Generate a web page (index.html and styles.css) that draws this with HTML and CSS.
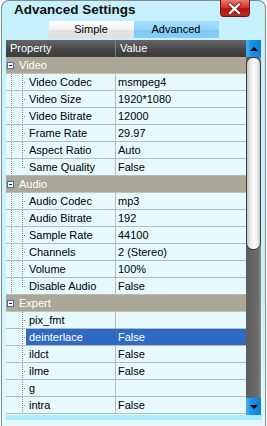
FILE: index.html
```html
<!DOCTYPE html>
<html>
<head>
<meta charset="utf-8">
<link rel="stylesheet" href="styles.css">
</head>
<body>
<div class="window">
  <div class="titlebar">
    <span class="title">Advanced Settings</span>
    <button class="close" aria-label="Close">
      <svg width="30" height="17" viewBox="0 0 30 17">
        <path d="M10 4.5 L19 13 M19 4.5 L10 13" stroke="#7a1010" stroke-width="4" stroke-linecap="square"/>
        <path d="M10 4.5 L19 13 M19 4.5 L10 13" stroke="#ffffff" stroke-width="2.4" stroke-linecap="square"/>
      </svg>
    </button>
  </div>
  <div class="tabs">
    <div class="tab">Simple</div>
    <div class="tab active">Advanced</div>
  </div>
  <div class="grid-wrap">
    <div class="grid">
      <div class="head"><div class="hprop">Property</div><div class="hval">Value</div></div>

      <div class="cat first"><span class="tog"></span><span>Video</span></div>
      <div class="row mid"><div class="gut"></div><div class="name">Video Codec</div><div class="value">msmpeg4</div></div>
      <div class="row mid"><div class="gut"></div><div class="name">Video Size</div><div class="value">1920*1080</div></div>
      <div class="row mid"><div class="gut"></div><div class="name">Video Bitrate</div><div class="value">12000</div></div>
      <div class="row mid"><div class="gut"></div><div class="name">Frame Rate</div><div class="value">29.97</div></div>
      <div class="row mid"><div class="gut"></div><div class="name">Aspect Ratio</div><div class="value">Auto</div></div>
      <div class="row last"><div class="gut"></div><div class="name">Same Quality</div><div class="value">False</div></div>

      <div class="cat"><span class="tog"></span><span>Audio</span></div>
      <div class="row mid"><div class="gut"></div><div class="name">Audio Codec</div><div class="value">mp3</div></div>
      <div class="row mid"><div class="gut"></div><div class="name">Audio Bitrate</div><div class="value">192</div></div>
      <div class="row mid"><div class="gut"></div><div class="name">Sample Rate</div><div class="value">44100</div></div>
      <div class="row mid"><div class="gut"></div><div class="name">Channels</div><div class="value">2 (Stereo)</div></div>
      <div class="row mid"><div class="gut"></div><div class="name">Volume</div><div class="value">100%</div></div>
      <div class="row last"><div class="gut"></div><div class="name">Disable Audio</div><div class="value">False</div></div>

      <div class="cat"><span class="tog"></span><span>Expert</span></div>
      <div class="row exp"><div class="gut"></div><div class="name">pix_fmt</div><div class="value"></div></div>
      <div class="row exp selected"><div class="gut"></div><div class="name">deinterlace</div><div class="value">False</div></div>
      <div class="row exp"><div class="gut"></div><div class="name">ildct</div><div class="value">False</div></div>
      <div class="row exp"><div class="gut"></div><div class="name">ilme</div><div class="value">False</div></div>
      <div class="row exp"><div class="gut"></div><div class="name">g</div><div class="value"></div></div>
      <div class="row exp"><div class="gut"></div><div class="name">intra</div><div class="value">False</div></div>
    </div>
    <div class="scroll">
      <div class="sbtn"><span class="arrow-up"></span></div>
      <div class="track"><div class="thumb"></div></div>
      <div class="sbtn"><span class="arrow-down"></span></div>
    </div>
  </div>
  <div class="foot"></div>
</div>
</body>
</html>
```
FILE: styles.css
```css
html, body {
  margin: 0;
  padding: 0;
  background: #ffffff;
}
body {
  width: 267px;
  height: 426px;
  overflow: hidden;
}
.window {
  margin-left: 1px;
  width: 265px;
  height: 426px;
  box-sizing: border-box;
  border: 1px solid #7d8d93;
  border-bottom: none;
  border-radius: 8px 8px 0 0;
  background: linear-gradient(#c6f0fb, #ccf3fc 70%, #e2fafe);
  font-family: "Liberation Sans", Arial, sans-serif;
  font-size: 11px;
  color: #000;
}
.titlebar {
  display: flex;
  justify-content: space-between;
  align-items: flex-start;
  height: 20px;
  padding-left: 12px;
}
.title {
  font-weight: bold;
  font-size: 13.5px;
  line-height: 18px;
  color: #111;
}
.close {
  width: 30px;
  height: 17px;
  margin: -1px 15px 0 0;
  padding: 0;
  border: 1px solid #6e1414;
  border-top: none;
  border-radius: 0 0 4px 4px;
  background: linear-gradient(#ec7a70, #d23a30 45%, #b8140e 55%, #c42a20);
  display: flex;
  align-items: center;
  justify-content: center;
  box-sizing: border-box;
}
.close svg {
  display: block;
  flex: none;
}
.tabs {
  display: flex;
  justify-content: center;
  height: 17px;
}
.tab {
  width: 85px;
  height: 17px;
  line-height: 17px;
  text-align: center;
  background: linear-gradient(#ffffff, #f2f2f2 50%, #e4e4e4 55%, #dedede);
}
.tab.active {
  background: linear-gradient(#a4dcf8, #94d4f6 50%, #7cc8f2 55%, #88cef4);
}
.grid-wrap {
  display: flex;
  margin: 2px 3px 0 4px;
  height: 375px;
}
.grid {
  width: 240px;
  align-self: flex-start;
}
.head {
  display: flex;
  height: 17px;
  line-height: 17px;
  color: #fff;
  background: linear-gradient(#656565, #505050 45%, #454545 55%, #3c3c3c);
}
.hprop {
  width: 105px;
  padding-left: 4px;
}
.hval {
  flex: 1;
  padding-left: 4px;
  border-left: 1px solid #7c7c7c;
}
.cat {
  display: flex;
  align-items: center;
  height: 16px;
  line-height: 16px;
  border-bottom: 1px solid #c2c2ba;
  background: #aba796;
  color: #fff;
}
.tog {
  width: 7px;
  height: 7px;
  box-sizing: border-box;
  margin: 0 5px 0 1px;
  border: 1px solid #4d6f99;
  background: linear-gradient(#202020, #202020) center / 3px 1px no-repeat, #f4f8fc;
}
.row {
  display: flex;
  height: 16px;
  line-height: 16px;
  border-bottom: 1px solid #b9b9b9;
  background: #e6f9fd;
}
.gut {
  width: 20px;
  height: 16px;
  flex: none;
  background-repeat: no-repeat;
}
.mid .gut {
  background-image:
    repeating-linear-gradient(to bottom, #8a8a8a 0 1px, transparent 1px 2px),
    repeating-linear-gradient(to bottom, #8a8a8a 0 1px, transparent 1px 2px),
    repeating-linear-gradient(to right, #8a8a8a 0 1px, transparent 1px 2px);
  background-size: 1px 16px, 1px 16px, 3px 1px;
  background-position: 5px 0, 16px 0, 18px 8px;
}
.last .gut {
  background-image:
    repeating-linear-gradient(to bottom, #8a8a8a 0 1px, transparent 1px 2px),
    repeating-linear-gradient(to bottom, #8a8a8a 0 1px, transparent 1px 2px),
    repeating-linear-gradient(to right, #8a8a8a 0 1px, transparent 1px 2px);
  background-size: 1px 16px, 1px 9px, 3px 1px;
  background-position: 5px 0, 16px 0, 18px 8px;
}
.exp .gut {
  background-image:
    repeating-linear-gradient(to bottom, #8a8a8a 0 1px, transparent 1px 2px),
    repeating-linear-gradient(to right, #8a8a8a 0 1px, transparent 1px 2px);
  background-size: 1px 16px, 3px 1px;
  background-position: 16px 0, 18px 8px;
}
.name {
  width: 86px;
  padding-left: 3px;
  flex: none;
  white-space: nowrap;
  overflow: hidden;
}
.value {
  flex: 1;
  padding-left: 2px;
  border-left: 1px solid #b9b9b9;
  white-space: nowrap;
}
.selected .name,
.selected .value {
  background: #316ac5;
  color: #fff;
}
.selected .value {
  border-left-color: #316ac5;
}
.scroll {
  width: 15px;
  height: 375px;
  display: flex;
  flex-direction: column;
}
.sbtn {
  height: 17px;
  flex: none;
  display: flex;
  align-items: center;
  justify-content: center;
  background: linear-gradient(to right, #44b0f4, #1a90e4 40%, #0c7ed6);
}
.arrow-up {
  width: 0;
  height: 0;
  border-left: 4px solid transparent;
  border-right: 4px solid transparent;
  border-bottom: 4px solid #000;
}
.arrow-down {
  width: 0;
  height: 0;
  border-left: 4px solid transparent;
  border-right: 4px solid transparent;
  border-top: 4px solid #000;
}
.track {
  flex: 1;
  background: linear-gradient(to right, #5e5e5e, #6c6c6c 80%, #8e8e8e);
}
.thumb {
  height: 193px;
  box-sizing: border-box;
  border: 1px solid #3a3a3a;
  border-radius: 7px;
  background: linear-gradient(to right, #c4c4c4, #eeeeee 30%, #fbfbfb 55%, #ececec 80%, #c8c8c8);
}
.foot {
  margin: 0 3px 0 4px;
  height: 5px;
  background: #adedfb;
}
```
